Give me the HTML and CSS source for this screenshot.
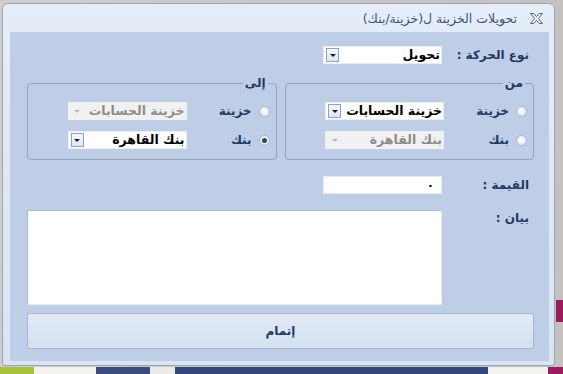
FILE: index.html
```html
<!DOCTYPE html>
<html lang="ar" dir="rtl">
<head>
    <meta charset="UTF-8">
    <title>تحويلات الخزينة</title>
    <link rel="stylesheet" href="styles.css">
</head>
<body>
    <div class="window">
        <div class="titlebar">
            <svg class="close-icon" width="13" height="11" viewBox="0 0 13 11">
                <polygon points="0.5,0.5 3.8,0.5 6.5,3.6 9.2,0.5 12.5,0.5 8.4,5.5 12.5,10.5 9.2,10.5 6.5,7.4 3.8,10.5 0.5,10.5 4.6,5.5" fill="#eef3fa" stroke="#51627c" stroke-width="1"/>
            </svg>
            <span class="title">تحويلات الخزينة ل(خزينة/بنك)</span>
        </div>

        <div class="client">
            <div class="field-row">
                <label class="lbl">نوع الحركة :</label>
                <div class="combo">
                    <span class="combo-text">تحويل</span>
                    <span class="combo-btn"></span>
                </div>
            </div>

            <div class="groups">
                <fieldset class="group">
                    <legend>من</legend>
                    <div class="opt">
                        <span class="radio"></span>
                        <span class="opt-label">خزينة</span>
                        <div class="combo">
                            <span class="combo-text">خزينة الحسابات</span>
                            <span class="combo-btn"></span>
                        </div>
                    </div>
                    <div class="opt">
                        <span class="radio"></span>
                        <span class="opt-label">بنك</span>
                        <div class="combo disabled">
                            <span class="combo-text">بنك القاهرة</span>
                            <span class="combo-btn"></span>
                        </div>
                    </div>
                </fieldset>

                <fieldset class="group">
                    <legend>إلى</legend>
                    <div class="opt">
                        <span class="radio"></span>
                        <span class="opt-label">خزينة</span>
                        <div class="combo disabled">
                            <span class="combo-text">خزينة الحسابات</span>
                            <span class="combo-btn"></span>
                        </div>
                    </div>
                    <div class="opt">
                        <span class="radio checked"></span>
                        <span class="opt-label">بنك</span>
                        <div class="combo">
                            <span class="combo-text">بنك القاهرة</span>
                            <span class="combo-btn"></span>
                        </div>
                    </div>
                </fieldset>
            </div>

            <div class="field-row value-row">
                <label class="lbl">القيمة :</label>
                <div class="textbox">٠</div>
            </div>

            <div class="field-row note-row">
                <label class="lbl">بيان :</label>
                <div class="textarea"></div>
            </div>

            <button class="done-btn">إتمام</button>
        </div>
    </div>
</body>
</html>
```

FILE: styles.css
```css
* {
    margin: 0;
    padding: 0;
    box-sizing: border-box;
}

body {
    font-family: "DejaVu Sans", sans-serif;
    height: 374px;
    overflow: hidden;
    direction: ltr;
    background:
        linear-gradient(90deg, #a7c33d 0 34px, #f3f2ee 34px 96px, #3a4c7c 96px 150px, #eceae6 150px 175px, #34477a 175px 488px, #f3f2ee 488px 548px, #9b1b5e 548px) bottom / 100% 7px no-repeat,
        linear-gradient(#9b1b5e, #9b1b5e) 556px 300px / 8px 22px no-repeat,
        linear-gradient(90deg, #d3ccc8, #c6c1bd);
}

.window {
    direction: rtl;
    width: 553px;
    height: 363px;
    margin: 3px 0 0 2px;
    padding: 0 5px 4px 7px;
    display: flex;
    flex-direction: column;
    background: linear-gradient(#e4edf8, #d9e5f3);
    border: 1px solid #95a7c0;
    border-radius: 6px 6px 3px 3px;
}

/* title bar */
.titlebar {
    height: 28px;
    display: flex;
    align-items: center;
    padding-right: 6px;
    gap: 13px;
}

.close-icon {
    display: block;
}

.title {
    font-size: 12.5px;
    color: #3d5479;
}

/* client area */
.client {
    flex: 1;
    background: #bdcee6;
    padding: 14px 15px 0 17px;
    display: flex;
    flex-direction: column;
}

.field-row {
    display: flex;
    align-items: center;
    padding-right: 5px;
}

.lbl {
    width: 87px;
    font-size: 12px;
    font-weight: bold;
    color: #1f3a63;
}

/* combo boxes */
.combo {
    width: 119px;
    height: 18px;
    display: flex;
    align-items: center;
    background: #ffffff;
    border: 1px solid #e9eef5;
}

.combo-text {
    flex: 1;
    font-size: 12.5px;
    font-weight: bold;
    color: #000000;
    padding-right: 1px;
    white-space: nowrap;
    overflow: hidden;
    line-height: 16px;
}

.combo-btn {
    width: 13px;
    height: 14px;
    margin-left: 2px;
    display: flex;
    align-items: center;
    justify-content: center;
    background: linear-gradient(#f6f8fc, #dde6f2);
    border: 1px solid #8ea3c2;
    flex-shrink: 0;
}

.combo-btn::after {
    content: "";
    border-left: 3px solid transparent;
    border-right: 3px solid transparent;
    border-top: 3px solid #1a1a1a;
}

.combo.disabled {
    background: #f1f1f1;
    border-color: #f1f1f1;
}

.combo.disabled .combo-text {
    color: #8c8c8c;
}

.combo.disabled .combo-btn {
    background: none;
    border-color: transparent;
}

.combo.disabled .combo-btn::after {
    border-top-color: #b9b9b9;
}

/* group boxes */
.groups {
    display: grid;
    grid-template-columns: 1fr 1fr;
    gap: 8px;
    margin-top: 12px;
}

.group {
    border: 1px solid #8fa3c0;
    border-radius: 4px;
    padding: 12px 6px 10px 6px;
    min-width: 0;
}

.group legend {
    font-size: 12px;
    font-weight: bold;
    color: #1f3a63;
    line-height: 14px;
    padding: 0 2px;
    margin-right: 2px;
}

.opt {
    display: flex;
    align-items: center;
    height: 18px;
}

.opt + .opt {
    margin-top: 11px;
}

.radio {
    width: 11px;
    height: 11px;
    border-radius: 50%;
    border: 1px solid #a9b6c8;
    background: radial-gradient(circle at 50% 40%, #ffffff, #d9dee6);
    margin-left: 7px;
    display: flex;
    align-items: center;
    justify-content: center;
    flex-shrink: 0;
}

.radio.checked::after {
    content: "";
    width: 5px;
    height: 5px;
    border-radius: 50%;
    background: #2f4566;
}

.opt-label {
    width: 65px;
    font-size: 12px;
    font-weight: bold;
    color: #1f3a63;
}

/* value + note */
.value-row {
    margin-top: 16px;
}

.textbox {
    width: 119px;
    height: 18px;
    background: #ffffff;
    border: 1px solid #e4ebf4;
    font-size: 12px;
    font-weight: bold;
    padding: 0 7px;
    line-height: 16px;
}

.note-row {
    margin-top: 16px;
    align-items: flex-start;
}

.note-row .lbl {
    margin-top: 1px;
}

.textarea {
    flex: 1;
    height: 95px;
    background: #ffffff;
    border: 1px solid #a9bcd6;
    border-right-color: #e3eaf3;
    border-bottom-color: #e3eaf3;
}

.done-btn {
    margin-top: 8px;
    height: 36px;
    width: 507px;
    font-family: inherit;
    font-size: 12px;
    font-weight: bold;
    color: #1f3a63;
    background: linear-gradient(#e2eaf6, #d4e0ef);
    border: 1px solid #a7b9d2;
    border-radius: 2px;
}
```
